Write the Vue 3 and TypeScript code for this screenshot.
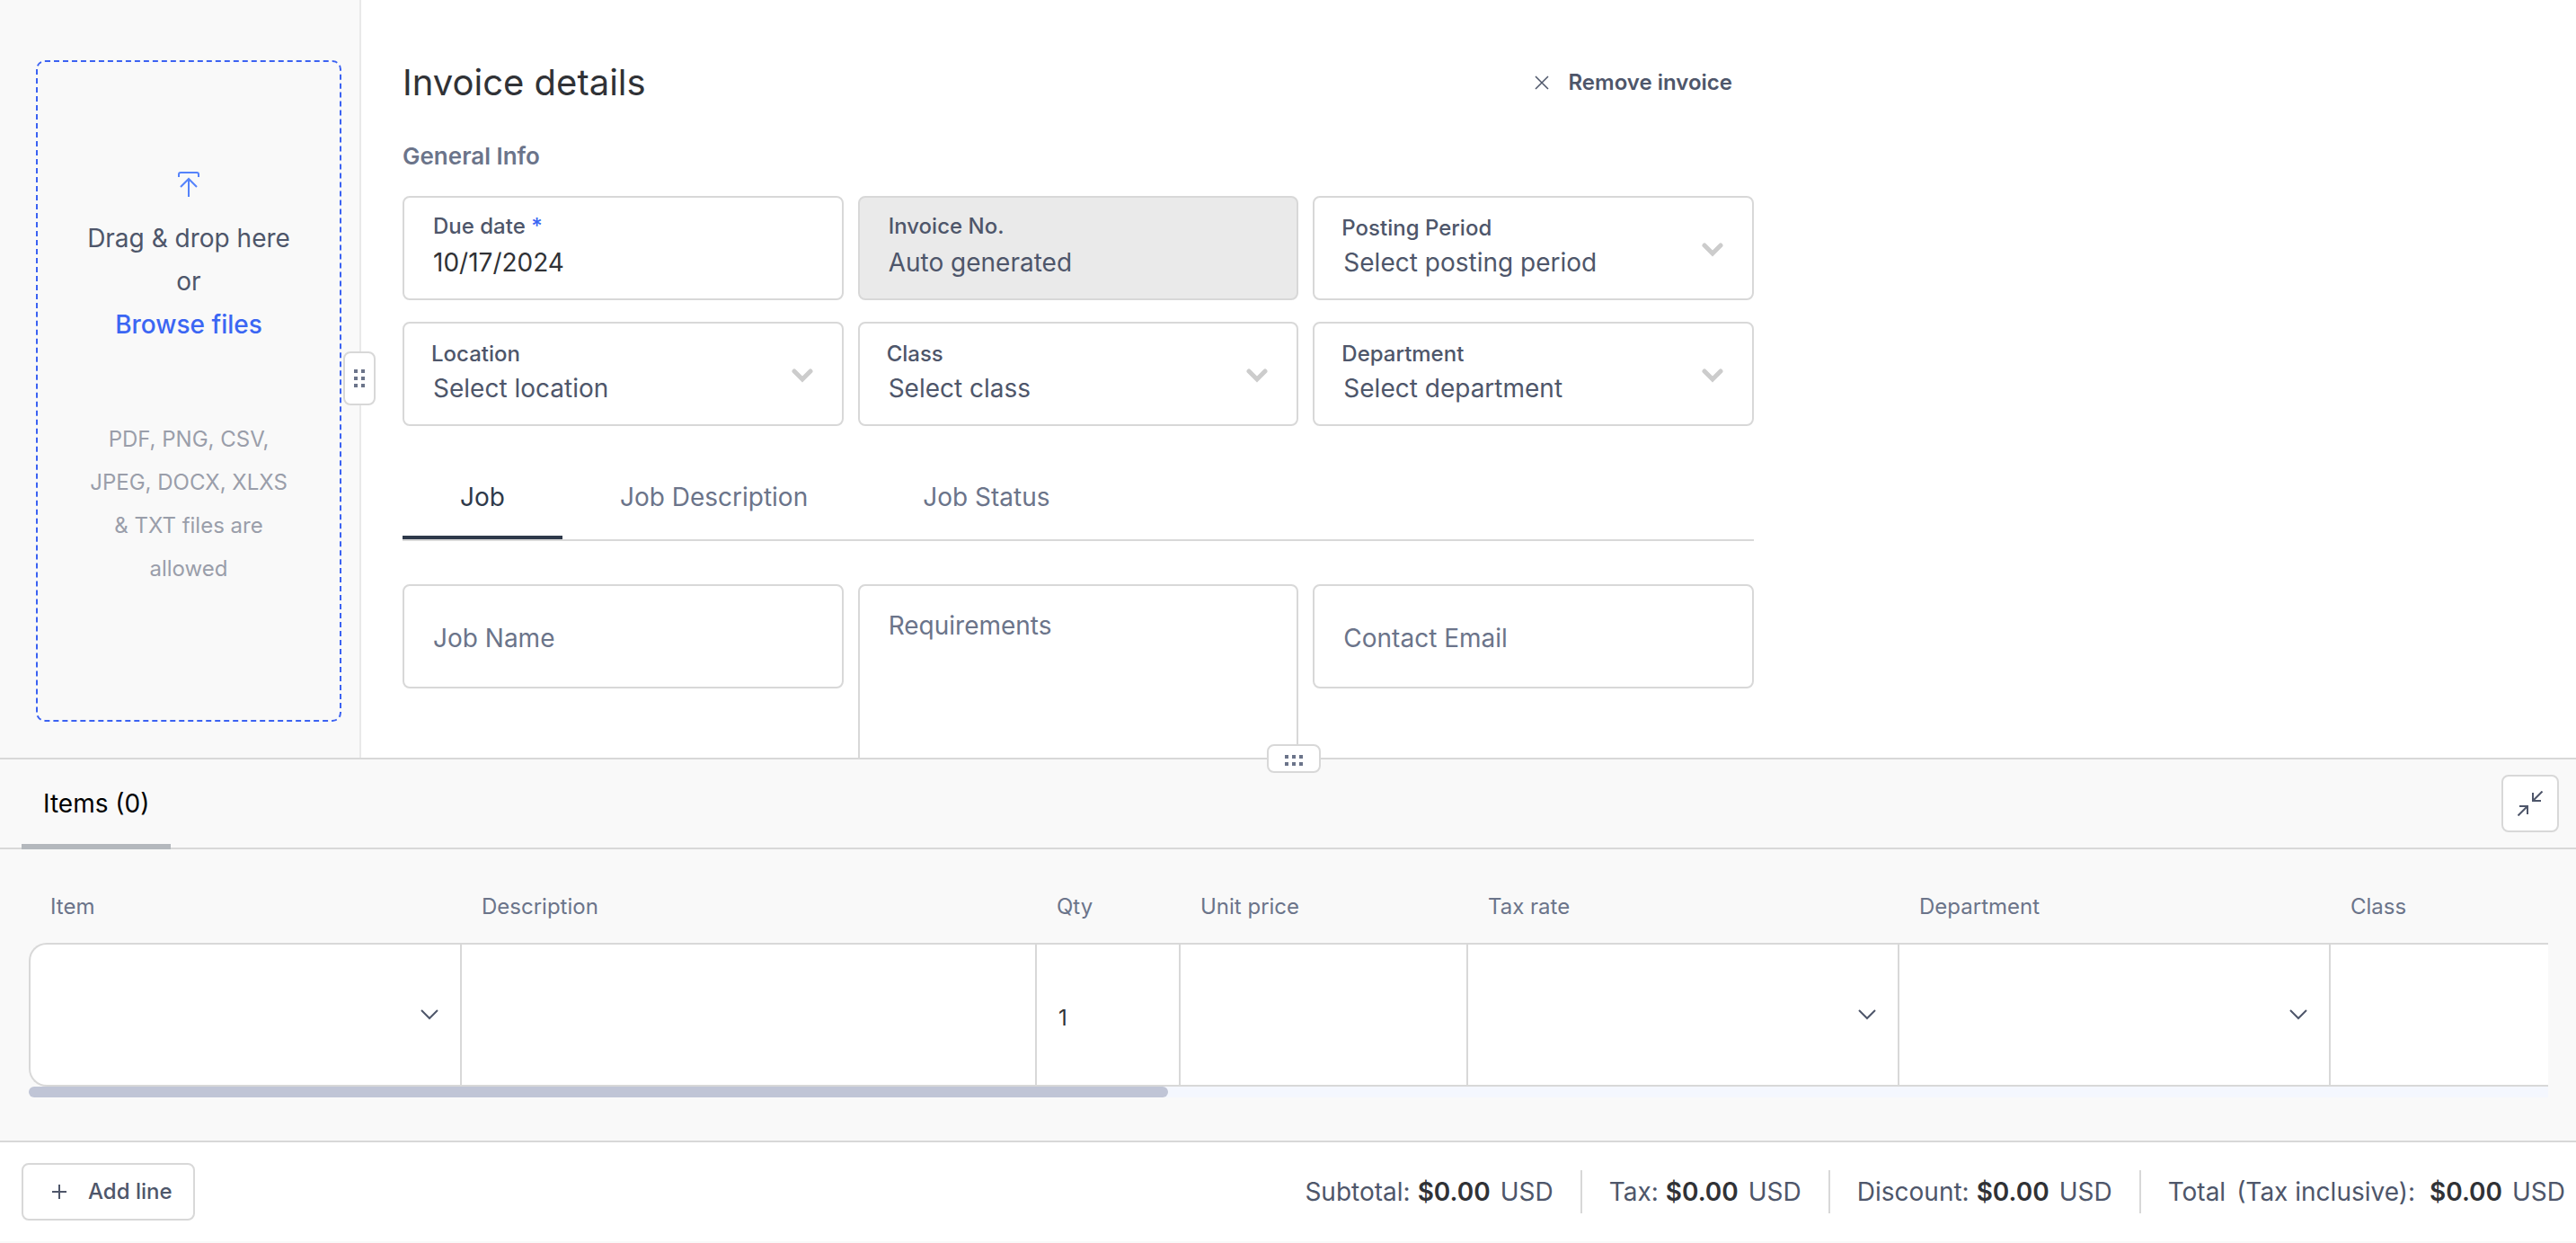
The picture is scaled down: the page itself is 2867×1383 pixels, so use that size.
<script setup lang="ts">
import { ref } from 'vue'

interface Field {
  id: string
  label: string
  kind: 'text' | 'select'
  value?: string
  placeholder?: string
  required?: boolean
  disabled?: boolean
}

interface Column {
  name: string
  width?: number
  kind: 'select' | 'text'
  value?: string
}

interface Total {
  label: string
  note?: string
  amount: string
}

const fields: Field[] = [
  { id: 'due-date', label: 'Due date', kind: 'text', value: '10/17/2024', required: true },
  { id: 'invoice-no', label: 'Invoice No.', kind: 'text', placeholder: 'Auto generated', disabled: true },
  { id: 'posting-period', label: 'Posting Period', kind: 'select', placeholder: 'Select posting period' },
  { id: 'location', label: 'Location', kind: 'select', placeholder: 'Select location' },
  { id: 'class', label: 'Class', kind: 'select', placeholder: 'Select class' },
  { id: 'department', label: 'Department', kind: 'select', placeholder: 'Select department' },
]

const tabs = ['Job', 'Job Description', 'Job Status']
const activeTab = ref('Job')

const columns: Column[] = [
  { name: 'Item', width: 480, kind: 'select' },
  { name: 'Description', width: 640, kind: 'text' },
  { name: 'Qty', width: 160, kind: 'text', value: '1' },
  { name: 'Unit price', width: 320, kind: 'text' },
  { name: 'Tax rate', width: 480, kind: 'select' },
  { name: 'Department', width: 480, kind: 'select' },
  { name: 'Class', kind: 'text' },
]

const totals: Total[] = [
  { label: 'Subtotal:', amount: '$0.00' },
  { label: 'Tax:', amount: '$0.00' },
  { label: 'Discount:', amount: '$0.00' },
  { label: 'Total', note: '(Tax inclusive):', amount: '$0.00' },
]
</script>

<template>
  <div class="page">
    <div class="upper">
      <aside class="sidebar">
        <div class="dropzone">
          <svg class="upload" viewBox="0 0 24 28" aria-hidden="true">
            <path d="M1 6V3q0-2 2-2h18q2 0 2 2v3M12 28V8M3 17l9-9 9 9" />
          </svg>
          <p class="drop-text">Drag &amp; drop here</p>
          <p class="drop-text">or</p>
          <a href="#" class="browse">Browse files</a>
          <p class="formats">PDF, PNG, CSV, JPEG, DOCX, XLXS &amp; TXT files are allowed</p>
        </div>
        <button type="button" class="handle handle-side" aria-label="Resize sidebar">
          <i v-for="n in 6" :key="n"></i>
        </button>
      </aside>

      <main class="details">
        <div class="form">
          <header class="form-head">
            <h1>Invoice details</h1>
            <button type="button" class="remove">
              <svg viewBox="0 0 16 16" aria-hidden="true"><path stroke-width="1.5" d="M1 1l14 14M15 1L1 15" /></svg>
              Remove invoice
            </button>
          </header>
          <h2>General Info</h2>

          <div class="grid">
            <div v-for="f in fields" :key="f.id" class="field" :class="[f.kind, { disabled: f.disabled }]">
              <label :for="f.id">{{ f.label }} <span v-if="f.required" class="star">*</span></label>
              <template v-if="f.kind === 'select'">
                <select :id="f.id">
                  <option>{{ f.placeholder }}</option>
                </select>
                <svg class="chevron" viewBox="0 0 24 16" aria-hidden="true"><path d="M3 3l9 9 9-9" /></svg>
              </template>
              <input v-else :id="f.id" type="text" :value="f.value" :placeholder="f.placeholder" :disabled="f.disabled" />
            </div>
          </div>

          <nav class="tabs">
            <button
              v-for="t in tabs"
              :key="t"
              type="button"
              :class="{ active: t === activeTab }"
              @click="activeTab = t"
            >{{ t }}</button>
          </nav>

          <div class="grid">
            <input class="plain" type="text" placeholder="Job Name" aria-label="Job Name" />
            <textarea class="plain tall" placeholder="Requirements" aria-label="Requirements"></textarea>
            <input class="plain" type="text" placeholder="Contact Email" aria-label="Contact Email" />
          </div>
        </div>
      </main>
    </div>

    <section class="items">
      <button type="button" class="handle handle-bottom" aria-label="Resize items">
        <i v-for="n in 6" :key="n"></i>
      </button>
      <div class="items-bar">
        <button type="button" class="items-tab">Items (0)</button>
        <button type="button" class="collapse" aria-label="Collapse">
          <svg viewBox="0 0 28 28" aria-hidden="true">
            <path d="M27.5 0.5L17 11M17 2v9h9M0.5 27.5L11 17M2 17h9v9" />
          </svg>
        </button>
      </div>

      <div class="table-area">
        <table>
          <colgroup>
            <col v-for="c in columns" :key="c.name" :style="c.width ? { width: c.width + 'px' } : undefined" />
          </colgroup>
          <thead>
            <tr>
              <th v-for="c in columns" :key="c.name" scope="col">{{ c.name }}</th>
            </tr>
          </thead>
          <tbody>
            <tr>
              <td v-for="c in columns" :key="c.name">
                <div class="cell">
                  <template v-if="c.kind === 'select'">
                    <select :aria-label="c.name"><option></option></select>
                    <svg class="cell-chevron" viewBox="0 0 20 12" aria-hidden="true"><path d="M1 1l9 9 9-9" /></svg>
                  </template>
                  <input v-else type="text" :value="c.value" :aria-label="c.name" />
                </div>
              </td>
            </tr>
          </tbody>
        </table>
        <div class="scroll-track"><div class="scroll-thumb"></div></div>
      </div>
    </section>

    <footer class="footer">
      <button type="button" class="add-line">
        <svg viewBox="0 0 16 16" aria-hidden="true"><path d="M8 0v16M0 8h16" /></svg>
        Add line
      </button>
      <div class="totals">
        <div v-for="t in totals" :key="t.label" class="total">
          <span>{{ t.label }}</span>
          <span v-if="t.note" class="note">{{ t.note }}</span>
          <strong>{{ t.amount }}</strong>
          <span class="currency">USD</span>
        </div>
      </div>
    </footer>
  </div>
</template>

<style>
body {
  margin: 0;
  background: #f9f9f9;
}
</style>

<style scoped>
* {
  box-sizing: border-box;
}

.page {
  display: flex;
  flex-direction: column;
  height: 100vh;
  padding-bottom: 2px;
  overflow: hidden;
  font-family: Inter, "Liberation Sans", sans-serif;
  font-size: 28px;
  line-height: 36px;
  color: #4e566a;
  background: #f9f9f9;
}

button,
input,
select,
textarea {
  margin: 0;
  padding: 0;
  border: 0;
  border-radius: 0;
  outline: 0;
  background: none;
  font: inherit;
  color: inherit;
  appearance: none;
}

button {
  cursor: pointer;
}

svg {
  display: block;
  flex: none;
  fill: none;
  stroke: currentColor;
  stroke-width: 2;
}

p,
h1,
h2 {
  margin: 0;
}

.upper {
  display: flex;
  flex: 1 1 0;
  min-height: 0;
}

.sidebar {
  position: relative;
  display: flex;
  flex: none;
  width: 402px;
  padding: 67px 20px 40px 40px;
  border-right: 2px solid #e9e9e9;
}

.dropzone {
  display: flex;
  flex: 1;
  flex-direction: column;
  align-items: center;
  padding: 122px 48px 0;
  border: 2px dashed #3b62f2;
  border-radius: 10px;
  line-height: 48px;
  text-align: center;
}

.upload {
  width: 24px;
  height: 28px;
  margin-bottom: 22px;
  color: #5583fb;
}

.drop-text {
  white-space: nowrap;
}

.browse {
  color: #3b66f3;
  font-weight: 500;
  text-decoration: none;
}

.formats {
  margin-top: 80px;
  font-size: 24px;
  color: #9a9eaa;
}

.handle {
  position: absolute;
  z-index: 1;
  display: grid;
  gap: 4px;
  place-content: center;
  border: 2px solid #d8d8d8;
  border-radius: 8px;
  background: #fff;
}

.handle i {
  width: 4px;
  height: 4px;
  background: #6b748a;
}

.handle-side {
  top: 391px;
  right: -18px;
  grid-template-columns: repeat(2, 4px);
  width: 36px;
  height: 60px;
}

.handle-bottom {
  top: -17px;
  left: calc(50% - 24px);
  grid-template-columns: repeat(3, 4px);
  width: 60px;
  height: 32px;
  padding-top: 4px;
}

.details {
  flex: 1;
  min-width: 0;
  padding: 66px 46px 0;
  overflow: hidden;
  background: #fff;
}

.form {
  max-width: 1504px;
}

.form-head {
  display: flex;
  align-items: center;
  justify-content: space-between;
  padding-right: 24px;
}

h1 {
  font-size: 40px;
  line-height: 52px;
  font-weight: 400;
  color: #303236;
}

h2 {
  margin: 38px 0 26px;
  font-size: 26px;
  line-height: 36px;
  font-weight: 600;
  color: #6b748a;
}

.remove {
  display: flex;
  align-items: center;
  gap: 22px;
  font-size: 24px;
  font-weight: 600;
}

.remove svg {
  width: 16px;
  height: 16px;
}

.grid {
  display: grid;
  grid-template-columns: repeat(3, minmax(0, 1fr));
  gap: 24px 16px;
  align-items: start;
}

.field {
  position: relative;
  display: flex;
  flex-direction: column;
  gap: 6px;
  height: 116px;
  padding: 16px 32px 0;
  border: 2px solid #d8d8d8;
  border-radius: 8px;
}

.field label {
  font-size: 24px;
  line-height: 32px;
  font-weight: 500;
}

.field.select {
  gap: 4px;
  padding: 18px 30px 0;
}

.field select {
  height: 36px;
  padding-left: 2px;
}

.field input {
  height: 36px;
  color: #303236;
}

.field.disabled {
  background: #eaeaea;
}

.star {
  color: #3b66f3;
}

input::placeholder {
  color: #4e566a;
  opacity: 1;
}

.chevron {
  position: absolute;
  top: 50%;
  right: 32px;
  width: 24px;
  height: 16px;
  margin-top: -6px;
  color: #ccc;
  stroke-width: 5;
  stroke-linecap: round;
  pointer-events: none;
}

.tabs {
  display: flex;
  margin: 32px 0 48px;
  border-bottom: 2px solid #d8d8d8;
}

.tabs button {
  height: 94px;
  padding: 4px 64px 0;
  border-bottom: 4px solid transparent;
  color: #6b748a;
}

.tabs .active {
  border-color: #2e394a;
  color: #2e394a;
}

.plain {
  height: 116px;
  padding: 4px 32px 0;
  border: 2px solid #d8d8d8;
  border-radius: 8px;
}

.plain::placeholder {
  color: #6b748a;
  opacity: 1;
}

.plain.tall {
  height: 256px;
  padding: 26px 32px;
  resize: none;
}

.items {
  position: relative;
  flex: none;
  border-top: 2px solid #d8d8d8;
}

.items-bar {
  display: flex;
  align-items: center;
  justify-content: space-between;
  height: 100px;
  padding: 0 19px 0 24px;
  border-bottom: 2px solid #d8d8d8;
}

.items-tab {
  align-self: stretch;
  margin-bottom: -2px;
  padding: 4px 24px 0;
  border-bottom: 6px solid #b4b8bd;
  color: #000;
}

.collapse {
  display: grid;
  place-content: center;
  width: 64px;
  height: 64px;
  border: 2px solid #d8d8d8;
  border-radius: 8px;
  background: #fff;
}

.collapse svg {
  width: 28px;
  height: 28px;
}

.table-area {
  padding: 24px 31px 48px 32px;
}

table {
  width: 100%;
  table-layout: fixed;
  border-spacing: 0;
  font-size: 24px;
  line-height: 32px;
}

th {
  height: 80px;
  padding: 0 24px;
  font-weight: 400;
  text-align: left;
  color: #6b748a;
}

td {
  height: 160px;
  padding: 0;
  border: 2px solid #d8d8d8;
  border-right: 0;
  background: #fff;
}

td:first-child {
  border-radius: 20px 0 0 20px;
}

.cell {
  position: relative;
  display: flex;
  height: 156px;
}

.cell input,
.cell select {
  width: 100%;
  padding: 8px 24px 0;
  color: #303236;
}

.cell-chevron {
  position: absolute;
  top: 72px;
  right: 24px;
  width: 20px;
  height: 12px;
  pointer-events: none;
}

.scroll-track {
  height: 12px;
  background: linear-gradient(90deg, transparent 20px, #f4f7fe 20px);
}

.scroll-thumb {
  width: 1268px;
  height: 12px;
  border-radius: 6px;
  background: #c0c5d6;
}

.footer {
  display: flex;
  flex: none;
  align-items: center;
  justify-content: space-between;
  height: 112px;
  padding: 0 12px 0 24px;
  border-top: 2px solid #d8d8d8;
  background: #fff;
}

.add-line {
  display: flex;
  align-items: center;
  gap: 24px;
  height: 64px;
  padding: 0 23px 0 32px;
  border: 2px solid #d8d8d8;
  border-radius: 8px;
  font-size: 24px;
  font-weight: 500;
}

.add-line svg {
  width: 16px;
  height: 16px;
}

.totals {
  display: flex;
}

.total {
  display: flex;
  align-items: center;
  height: 48px;
  gap: 8px;
  white-space: nowrap;
}

.total + .total {
  margin-left: 30px;
  padding-left: 30px;
  border-left: 2px solid #d8d8d8;
}

.total strong {
  font-weight: 600;
  color: #303236;
}

.note {
  margin: 0 8px 0 4px;
}

.currency {
  margin-left: 3px;
}
</style>
